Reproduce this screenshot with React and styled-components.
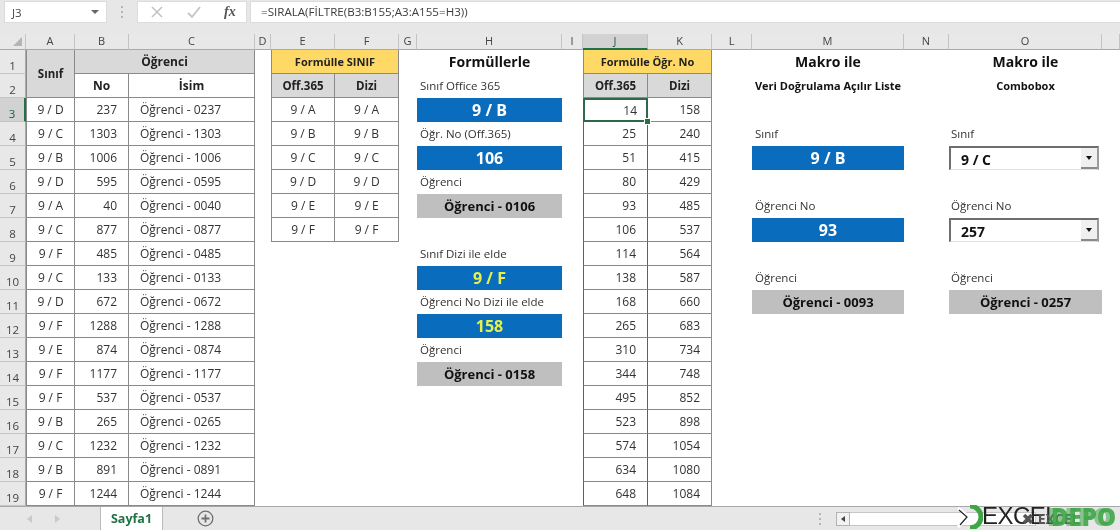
import React from "react";
import styled, { createGlobalStyle } from "styled-components";

const Global = createGlobalStyle`
  html, body { margin: 0; padding: 0; background: #fff; }
  body { font-family: "Open Sans", "Liberation Sans", sans-serif; color: #262626; }
  #root { width: 1120px; height: 530px; overflow: hidden; }
`;

const Page = styled.div`
  position: relative; width: 1120px; height: 530px; display: flex; flex-direction: column;
  overflow: hidden; background: #fff; filter: blur(0.35px);
`;
const FormulaBar = styled.div`
  height: 34px; flex: none; background: #e7e7e7; display: flex; align-items: flex-start;
  padding: 2px 0 0 5px; box-sizing: border-box;
`;
const NameBox = styled.div`
  width: 101px; height: 20px; background: #fff; display: flex; align-items: center; justify-content: space-between;
  padding: 0 7px; box-sizing: border-box; font-size: 11.5px; color: #444; box-shadow: 0 0 0 1px #dcdcdc;
`;
const Caret = styled.span`
  width: 0; height: 0; border-left: 4px solid transparent; border-right: 4px solid transparent; border-top: 4px solid #666;
`;
const Grip = styled.div`
  width: 32px; display: flex; flex-direction: column; align-items: center; gap: 3px; padding-top: 4px; flex: none;
  & > i { width: 2px; height: 2px; background: #b5b5b5; display: block; }
`;
const FxBox = styled.div`
  width: 108px; height: 20px; background: #fff; box-shadow: 0 0 0 1px #dcdcdc; display: flex; align-items: center;
  padding-left: 12px; gap: 22px; box-sizing: border-box; flex: none;
`;
const FxLabel = styled.span`
  font-family: "Liberation Serif", serif; font-style: italic; font-weight: 700; font-size: 14px; color: #555;
`;
const FormulaInput = styled.div`
  flex: 1; height: 20px; background: #fff; margin-left: 5px; padding-left: 10px; font-size: 11.6px; line-height: 20px; color: #3d3d3d;
  box-shadow: 0 0 0 1px #dcdcdc;
`;

const Sheet = styled.div`
  flex: none; height: 472px; overflow: hidden; display: grid;
  grid-template-columns: 26px 49px 54px 126px 16px 64px 64px 18px 145px 21px 65px 64px 40px 152px 45px 153px 18px;
  grid-template-rows: 16px repeat(19, 24px);
`;
const ColHead = styled.div`
  grid-column: ${p => p.$c}; grid-row: 1; background: ${p => (p.$on ? "#d2d2d2" : "#e8e8e8")};
  border-right: 1px solid #c4c4c4; border-bottom: ${p => (p.$on ? "2px solid #217346" : "1px solid #a9a9a9")};
  font-size: 11px; line-height: 14px; text-align: center; color: ${p => (p.$on ? "#1f5c3a" : "#444")}; box-sizing: border-box;
`;
const Corner = styled.div`
  grid-column: 1; grid-row: 1; background: #e8e8e8; border-right: 1px solid #c4c4c4; border-bottom: 1px solid #a9a9a9;
  box-sizing: border-box; display: flex; align-items: flex-end; justify-content: flex-end; padding: 0 3px 3px 0;
`;
const RowHead = styled.div`
  grid-column: 1; grid-row: ${p => p.$r}; background: ${p => (p.$on ? "#d2d2d2" : "#e8e8e8")};
  border-right: ${p => (p.$on ? "2px solid #217346" : "1px solid #a9a9a9")}; border-bottom: 1px solid #c4c4c4;
  font-size: 11.5px; line-height: 12px; color: ${p => (p.$on ? "#1f5c3a" : "#444")}; box-sizing: border-box;
  display: flex; align-items: flex-end; justify-content: center; padding-bottom: 1px;
`;
const Cell = styled.div`
  position: relative; grid-column: ${p => p.$c} / span ${p => p.$cs || 1}; grid-row: ${p => p.$r} / span ${p => p.$rs || 1};
  box-sizing: border-box; display: flex; align-items: center; white-space: nowrap;
  justify-content: ${p => p.$a || "center"}; padding: 0 ${p => (p.$a === "flex-end" ? "11px" : "0")} 0 ${p => (p.$a === "flex-start" ? "11px" : "0")};
  border-right: 1px solid #8a8a8a; border-bottom: 1px solid #8a8a8a; border-left: ${p => (p.$l ? "1px solid #8a8a8a" : "0")};
  font-size: 12px; color: #333; background: ${p => p.$bg || "#fff"}; font-weight: ${p => (p.$b ? 700 : 400)};
`;
const HeadCell = styled(Cell)`
  font-weight: 700; font-size: ${p => p.$s || 11.5}px; color: #222; background: ${p => p.$bg || "#d9d9d9"};
`;
const SpillCell = styled(Cell)`
  border-right-color: #3564c0; border-left: 1px solid #3564c0;
`;
const ActiveCell = styled(Cell)`
  box-shadow: inset 0 0 0 2px #2b6a4b; border: 0;
`;
const Handle = styled.span`
  position: absolute; right: -3px; bottom: -3px; width: 5px; height: 5px; background: #217346; border: 1px solid #fff; z-index: 2;
`;
const Title = styled.div`
  grid-column: ${p => p.$c}; grid-row: ${p => p.$r}; font-weight: 700; font-size: ${p => p.$s || 14}px; color: #111;
  display: flex; align-items: center; justify-content: center; white-space: nowrap; padding-bottom: 2px;
`;
const FieldLabel = styled.div`
  grid-column: ${p => p.$c}; grid-row: ${p => p.$r}; font-size: 11.5px; color: #333;
  display: flex; align-items: center; padding: 0 0 2px ${p => p.$p || 3}px; white-space: nowrap;
`;
const Output = styled.div`
  grid-column: ${p => p.$c}; grid-row: ${p => p.$r}; display: flex; align-items: center; justify-content: center;
  font-weight: 700; white-space: nowrap;
  font-size: ${p => (p.$k === "gray" ? 13 : 16)}px;
  background: ${p => (p.$k === "gray" ? "#bfbfbf" : "#0a6cbd")};
  color: ${p => (p.$k === "gray" ? "#111" : p.$k === "lime" ? "#e4f24a" : "#fff")};
`;
const Combo = styled.div`
  grid-column: ${p => p.$c}; grid-row: ${p => p.$r}; display: flex; align-items: stretch; box-sizing: border-box; margin-right: 3px;
  border-top: 2px solid #6e6e6e; border-left: 2px solid #6e6e6e; border-right: 2px solid #9a9a9a;
  border-bottom: 1px solid #e0e0e0; font-weight: 700; font-size: 14px; color: #111;
`;
const ComboText = styled.div`
  flex: 1; display: flex; align-items: center; padding-left: 10px; margin-top: 1px;
`;
const ComboBtn = styled.div`
  width: 16px; background: #f0f0f0; display: flex; align-items: center; justify-content: center; border-bottom: 2px solid #8a8a8a;
`;
const ComboCaret = styled.span`
  width: 0; height: 0; border-left: 3.5px solid transparent; border-right: 3.5px solid transparent; border-top: 4px solid #111;
`;

const StatusBar = styled.div`
  flex: none; height: 24px; background: #e7e7e7; border-top: 1px solid #a8a8a8; box-sizing: border-box; display: flex; align-items: stretch;
`;
const TabNav = styled.div`
  width: 100px; display: flex; align-items: center; padding-left: 27px; gap: 23px; box-sizing: border-box; flex: none;
`;
const TabArrow = styled.span`
  width: 0; height: 0; border-top: 4px solid transparent; border-bottom: 4px solid transparent;
  ${p => (p.$left ? "border-right: 5px solid #c9c9c9;" : "border-left: 5px solid #c9c9c9;")}
`;
const Tab = styled.div`
  width: 63px; background: #fff; display: flex; align-items: center; justify-content: center; font-weight: 700; font-size: 12.5px; color: #217346;
  border-left: 1px solid #bbb; border-right: 1px solid #bbb; box-sizing: border-box; flex: none;
`;
const AddWrap = styled.div`
  width: 84px; display: flex; align-items: center; justify-content: center; flex: none;
`;
const StatusGrip = styled(Grip)`
  margin-left: 563px; width: 20px; padding-top: 0; justify-content: center;
`;
const ScrollBar = styled.div`
  display: flex; margin-left: 6px; align-self: center; height: 14px; width: 200px;
`;
const ScrollBtn = styled.div`
  width: 14px; background: #f2f2f2; border: 1px solid #b4b4b4; box-sizing: border-box; display: flex; align-items: center; justify-content: center; flex: none;
`;
const ScrollTrack = styled.div`
  flex: 1; background: #fff; border: 1px solid #c6c6c6; border-left: 0; box-sizing: border-box;
`;
const ScrollArrow = styled.span`
  width: 0; height: 0; border-top: 3.5px solid transparent; border-bottom: 3.5px solid transparent; border-right: 4px solid #444;
`;

const Watermark = styled.div`
  position: absolute; left: 955px; top: 502px; width: 165px; height: 28px; overflow: hidden; pointer-events: none;
`;
const MarkLogo = styled.svg`
  position: absolute; left: 2px; top: 3px;
`;
const MarkExcel = styled.span`
  position: absolute; left: 27px; top: 0; font-family: "Liberation Sans", sans-serif; font-size: 24px; line-height: 28px; color: #222; letter-spacing: -0.5px; font-weight: 400;
`;
const MarkSmall = styled.span`
  position: absolute; left: 67px; top: 7px; font-size: 14px; line-height: 20px; font-weight: 700; color: #555;
`;
const MarkDepo = styled.span`
  position: absolute; left: ${p => p.$x}px; top: 2px; font-family: "Open Sans", sans-serif; font-size: 24px; line-height: 26px; font-weight: 800; color: #3fa648; opacity: ${p => p.$o};
`;

const colLetters = ["A","B","C","D","E","F","G","H","I","J","K","L","M","N","O",""];
const classes = ["9 / D","9 / C","9 / B","9 / D","9 / A","9 / C","9 / F","9 / C","9 / D","9 / F","9 / E","9 / F","9 / F","9 / B","9 / C","9 / B","9 / F"];
const numbers = [237,1303,1006,595,40,877,485,133,672,1288,874,1177,537,265,1232,891,1244];
const sorted = [14,25,51,80,93,106,114,138,168,265,310,344,495,523,574,634,648];
const arrays = [158,240,415,429,485,537,564,587,660,683,734,748,852,898,1054,1080,1084];
const letters = ["9 / A","9 / B","9 / C","9 / D","9 / E","9 / F"];
const pad = n => String(n).padStart(4, "0");

// grid column index = letter index + 2, grid row index = sheet row + 1
export default function App() {
  return (
    <Page>
      <Global />
      <FormulaBar>
        <NameBox>J3<Caret /></NameBox>
        <Grip><i /><i /><i /></Grip>
        <FxBox>
          <svg width="14" height="14" viewBox="0 0 14 14" fill="none" stroke="#c4c4c4" strokeWidth="1.6"><path d="M2 2l10 10M12 2L2 12" /></svg>
          <svg width="16" height="14" viewBox="0 0 16 14" fill="none" stroke="#c4c4c4" strokeWidth="1.8"><path d="M2 8l4 4 8-10" /></svg>
          <FxLabel>fx</FxLabel>
        </FxBox>
        <FormulaInput>=SIRALA(FİLTRE(B3:B155;A3:A155=H3))</FormulaInput>
      </FormulaBar>

      <Sheet>
        <Corner><svg width="9" height="9"><path d="M9 0v9H0z" fill="#b4b4b4" /></svg></Corner>
        {colLetters.map((l, i) => <ColHead key={i} $c={i + 2} $on={l === "J"}>{l}</ColHead>)}
        {Array.from({ length: 19 }, (_, i) => <RowHead key={i} $r={i + 2} $on={i === 2}>{i + 1}</RowHead>)}

        <HeadCell $c={2} $r={2} $rs={2} $l>Sınıf</HeadCell>
        <HeadCell $c={3} $r={2} $cs={2} $s={12}>Öğrenci</HeadCell>
        <HeadCell $c={3} $r={3} $bg="#fff" $s={12}>No</HeadCell>
        <HeadCell $c={4} $r={3} $bg="#fff" $s={12}>İsim</HeadCell>
        {classes.map((c, i) => (
          <React.Fragment key={i}>
            <Cell $c={2} $r={i + 4} $l>{c}</Cell>
            <Cell $c={3} $r={i + 4} $a="flex-end">{numbers[i]}</Cell>
            <Cell $c={4} $r={i + 4} $a="flex-start">Öğrenci - {pad(numbers[i])}</Cell>
          </React.Fragment>
        ))}

        <HeadCell $c={6} $r={2} $cs={2} $l $bg="#ffd966" $s={11}>Formülle SINIF</HeadCell>
        <HeadCell $c={6} $r={3} $l>Off.365</HeadCell>
        <HeadCell $c={7} $r={3}>Dizi</HeadCell>
        {letters.map((c, i) => (
          <React.Fragment key={c}>
            <Cell $c={6} $r={i + 4} $l>{c}</Cell>
            <Cell $c={7} $r={i + 4}>{c}</Cell>
          </React.Fragment>
        ))}

        <Title $c={9} $r={2}>Formüllerle</Title>
        <FieldLabel $c={9} $r={3}>Sınıf Office 365</FieldLabel>
        <Output $c={9} $r={4}>9 / B</Output>
        <FieldLabel $c={9} $r={5}>Öğr. No (Off.365)</FieldLabel>
        <Output $c={9} $r={6}>106</Output>
        <FieldLabel $c={9} $r={7}>Öğrenci</FieldLabel>
        <Output $c={9} $r={8} $k="gray">Öğrenci - 0106</Output>
        <FieldLabel $c={9} $r={10}>Sınıf Dizi ile elde</FieldLabel>
        <Output $c={9} $r={11} $k="lime">9 / F</Output>
        <FieldLabel $c={9} $r={12}>Öğrenci No Dizi ile elde</FieldLabel>
        <Output $c={9} $r={13} $k="lime">158</Output>
        <FieldLabel $c={9} $r={14}>Öğrenci</FieldLabel>
        <Output $c={9} $r={15} $k="gray">Öğrenci - 0158</Output>

        <HeadCell $c={11} $r={2} $cs={2} $l $bg="#ffd966" $s={11}>Formülle Öğr. No</HeadCell>
        <HeadCell $c={11} $r={3} $l>Off.365</HeadCell>
        <HeadCell $c={12} $r={3}>Dizi</HeadCell>
        {sorted.map((n, i) => (
          <React.Fragment key={n}>
            {i === 0
              ? <ActiveCell $c={11} $r={4} $a="flex-end">{n}<Handle /></ActiveCell>
              : <SpillCell $c={11} $r={i + 4} $a="flex-end">{n}</SpillCell>}
            <Cell $c={12} $r={i + 4} $a="flex-end">{arrays[i]}</Cell>
          </React.Fragment>
        ))}

        <Title $c={14} $r={2}>Makro ile</Title>
        <Title $c={14} $r={3} $s={11}>Veri Doğrulama Açılır Liste</Title>
        <FieldLabel $c={14} $r={5}>Sınıf</FieldLabel>
        <Output $c={14} $r={6}>9 / B</Output>
        <FieldLabel $c={14} $r={8}>Öğrenci No</FieldLabel>
        <Output $c={14} $r={9}>93</Output>
        <FieldLabel $c={14} $r={11}>Öğrenci</FieldLabel>
        <Output $c={14} $r={12} $k="gray">Öğrenci - 0093</Output>

        <Title $c={16} $r={2}>Makro ile</Title>
        <Title $c={16} $r={3} $s={11}>Combobox</Title>
        <FieldLabel $c={16} $r={5} $p={2}>Sınıf</FieldLabel>
        <Combo $c={16} $r={6}><ComboText>9 / C</ComboText><ComboBtn><ComboCaret /></ComboBtn></Combo>
        <FieldLabel $c={16} $r={8} $p={2}>Öğrenci No</FieldLabel>
        <Combo $c={16} $r={9}><ComboText>257</ComboText><ComboBtn><ComboCaret /></ComboBtn></Combo>
        <FieldLabel $c={16} $r={11} $p={2}>Öğrenci</FieldLabel>
        <Output $c={16} $r={12} $k="gray">Öğrenci - 0257</Output>
      </Sheet>

      <StatusBar>
        <TabNav><TabArrow $left /><TabArrow /></TabNav>
        <Tab>Sayfa1</Tab>
        <AddWrap>
          <svg width="17" height="17" viewBox="0 0 17 17" fill="none" stroke="#6f6f6f" strokeWidth="1.3">
            <circle cx="8.5" cy="8.5" r="7.3" />
            <path d="M8.5 4.5v8M4.5 8.5h8" strokeWidth="1.8" />
          </svg>
        </AddWrap>
        <StatusGrip><i /><i /><i /></StatusGrip>
        <ScrollBar>
          <ScrollBtn><ScrollArrow /></ScrollBtn>
          <ScrollTrack />
        </ScrollBar>
      </StatusBar>

      <Watermark>
        <MarkLogo width="26" height="24" viewBox="0 0 26 24" fill="none">
          <path d="M1 3l11 9L1 22" stroke="#fff" strokeWidth="3" />
          <path d="M2 5l8 7-7 8" stroke="#222" strokeWidth="1.2" />
          <path d="M13 1a11 11 0 0 1 0 22" stroke="#3fa648" strokeWidth="5" />
        </MarkLogo>
        <MarkExcel>EXCEL</MarkExcel>
        <MarkSmall>✖ EXCEL</MarkSmall>
        <MarkDepo $x={92} $o={0.55}>DEPO</MarkDepo>
        <MarkDepo $x={96} $o={0.9}>DEPO</MarkDepo>
      </Watermark>
    </Page>
  );
}
